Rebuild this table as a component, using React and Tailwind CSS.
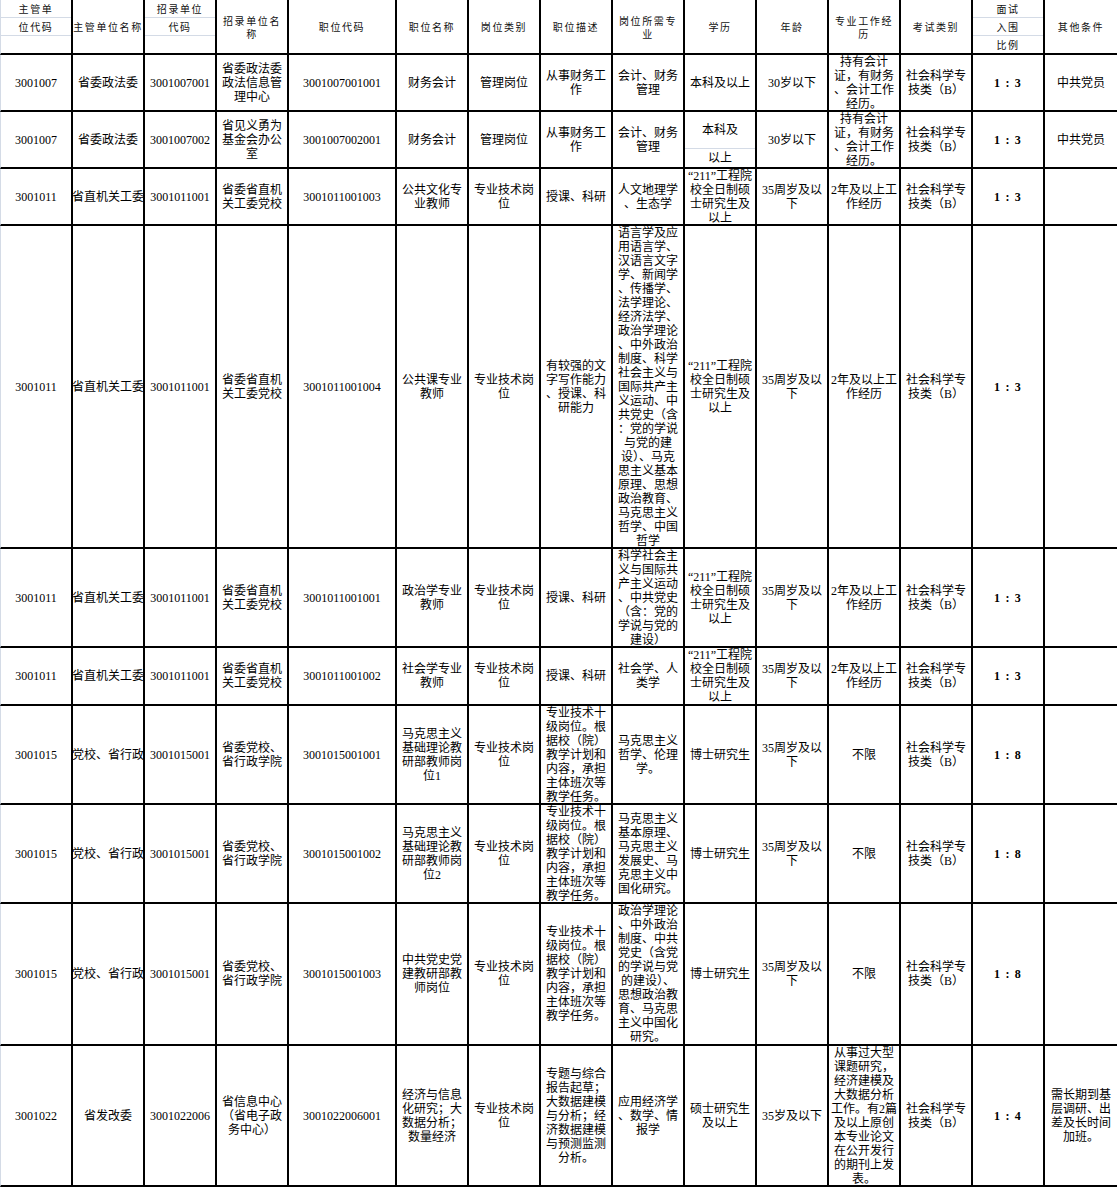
import clsx from "clsx";

// 职位表 — 招录职位一览
const GRID_COLS =
  "grid-cols-[73px_72px_72px_72px_108px_72px_72px_72px_72px_72px_72px_72px_72px_72px_72px]";
const GRID_ROWS =
  "grid-rows-[55px_57px_57px_57px_323px_99px_58px_99px_99px_142px_141px]";

const header = [
  { stack: ["主管单", "位代码", ""] },
  "主管单位名称",
  { stack: ["招录单位", "代码", ""] },
  "招录单位名\n称",
  "职位代码",
  "职位名称",
  "岗位类别",
  "职位描述",
  "岗位所需专\n业",
  "学历",
  "年龄",
  "专业工作经\n历",
  "考试类别",
  { stack: ["面试", "入围", "比例"] },
  "其他条件",
];

const exam = "社会科学专\n技类（B）";
const grad211 = "“211”工程院\n校全日制硕\n士研究生及\n以上";
const age35 = "35周岁及以\n下";
const work2 = "2年及以上工\n作经历";
const tech = "专业技术岗\n位";
const dangxiao = "专业技术十\n级岗位。根\n据校（院）\n教学计划和\n内容，承担\n主体班次等\n教学任务。";

const rows = [
  [
    "3001007", "省委政法委", "3001007001", "省委政法委\n政法信息管\n理中心", "3001007001001",
    "财务会计", "管理岗位", "从事财务工\n作", "会计、财务\n管理", "本科及以上", "30岁以下",
    "持有会计\n证，有财务\n、会计工作\n经历。", exam, "1 : 3", "中共党员",
  ],
  [
    "3001007", "省委政法委", "3001007002", "省见义勇为\n基金会办公\n室", "3001007002001",
    "财务会计", "管理岗位", "从事财务工\n作", "会计、财务\n管理", { split: ["本科及", "以上"] },
    "30岁以下", "持有会计\n证，有财务\n、会计工作\n经历。", exam, "1 : 3", "中共党员",
  ],
  [
    "3001011", "省直机关工委", "3001011001", "省委省直机\n关工委党校", "3001011001003",
    "公共文化专\n业教师", tech, "授课、科研", "人文地理学\n、生态学", grad211, age35, work2,
    exam, "1 : 3", "",
  ],
  [
    "3001011", "省直机关工委", "3001011001", "省委省直机\n关工委党校", "3001011001004",
    "公共课专业\n教师", tech, "有较强的文\n字写作能力\n、授课、科\n研能力",
    "语言学及应\n用语言学、\n汉语言文字\n学、新闻学\n、传播学、\n法学理论、\n经济法学、\n政治学理论\n、中外政治\n制度、科学\n社会主义与\n国际共产主\n义运动、中\n共党史（含\n：党的学说\n与党的建\n设）、马克\n思主义基本\n原理、思想\n政治教育、\n马克思主义\n哲学、中国\n哲学",
    grad211, age35, work2, exam, "1 : 3", "",
  ],
  [
    "3001011", "省直机关工委", "3001011001", "省委省直机\n关工委党校", "3001011001001",
    "政治学专业\n教师", tech, "授课、科研",
    "科学社会主\n义与国际共\n产主义运动\n、中共党史\n（含：党的\n学说与党的\n建设）",
    grad211, age35, work2, exam, "1 : 3", "",
  ],
  [
    "3001011", "省直机关工委", "3001011001", "省委省直机\n关工委党校", "3001011001002",
    "社会学专业\n教师", tech, "授课、科研", "社会学、人\n类学", grad211, age35, work2,
    exam, "1 : 3", "",
  ],
  [
    "3001015", "党校、省行政", "3001015001", "省委党校、\n省行政学院", "3001015001001",
    "马克思主义\n基础理论教\n研部教师岗\n位1", tech, dangxiao, "马克思主义\n哲学、伦理\n学。",
    "博士研究生", age35, "不限", exam, "1 : 8", "",
  ],
  [
    "3001015", "党校、省行政", "3001015001", "省委党校、\n省行政学院", "3001015001002",
    "马克思主义\n基础理论教\n研部教师岗\n位2", tech, dangxiao,
    "马克思主义\n基本原理、\n马克思主义\n发展史、马\n克思主义中\n国化研究。",
    "博士研究生", age35, "不限", exam, "1 : 8", "",
  ],
  [
    "3001015", "党校、省行政", "3001015001", "省委党校、\n省行政学院", "3001015001003",
    "中共党史党\n建教研部教\n师岗位", tech, dangxiao,
    "政治学理论\n、中外政治\n制度、中共\n党史（含党\n的学说与党\n的建设）、\n思想政治教\n育、马克思\n主义中国化\n研究。",
    "博士研究生", age35, "不限", exam, "1 : 8", "",
  ],
  [
    "3001022", "省发改委", "3001022006", "省信息中心\n（省电子政\n务中心）", "3001022006001",
    "经济与信息\n化研究；大\n数据分析；\n数量经济", tech,
    "专题与综合\n报告起草；\n大数据建模\n与分析；经\n济数据建模\n与预测监测\n分析。",
    "应用经济学\n、数学、情\n报学", "硕士研究生\n及以上", "35岁及以下",
    "从事过大型\n课题研究，\n经济建模及\n大数据分析\n工作。有2篇\n及以上原创\n本专业论文\n在公开发行\n的期刊上发\n表。",
    exam, "1 : 4", "需长期到基\n层调研、出\n差及长时间\n加班。",
  ],
];

function cellClass(col) {
  return clsx(
    "flex items-center justify-center overflow-hidden border-b-2 border-black text-center",
    col < 14 && "border-r-2",
    col === 0 && "border-l border-l-[#d4dbe6]"
  );
}

function Stack({ lines }) {
  return (
    <div className="flex w-full flex-col self-stretch">
      <div className="flex h-[18px] items-center justify-center border-b border-[#d4dbe6]">
        {lines[0]}
      </div>
      <div className="flex h-[18px] items-center justify-center border-b border-[#d4dbe6]">
        {lines[1]}
      </div>
      <div className="flex flex-1 items-center justify-center">{lines[2]}</div>
    </div>
  );
}

function Split({ parts }) {
  return (
    <div className="flex w-full flex-col self-stretch">
      <div className="flex h-[37px] items-center justify-center border-b border-[#d4dbe6]">
        {parts[0]}
      </div>
      <div className="flex flex-1 items-center justify-center">{parts[1]}</div>
    </div>
  );
}

export default function App() {
  return (
    <div className="w-[1117px] bg-white text-black">
      <div className={clsx("grid", GRID_COLS, GRID_ROWS)}>
        {/* Header */}
        {header.map((h, i) => (
          <div
            key={"h" + i}
            className={clsx(
              cellClass(i),
              "font-['Noto_Sans_CJK_SC',sans-serif] text-[10px] leading-[13px] tracking-[1.6px] text-[#111]"
            )}
          >
            {typeof h === "string" ? (
              <div className="whitespace-pre">{h}</div>
            ) : (
              <Stack lines={h.stack} />
            )}
          </div>
        ))}

        {/* Body */}
        {rows.map((row, r) =>
          row.map((c, i) => (
            <div
              key={r + "-" + i}
              className={clsx(
                cellClass(i),
                "font-['Liberation_Serif','Noto_Sans_CJK_SC',serif] text-[12px] leading-[14px]",
                i === 13 && "font-bold tracking-[1.2px]"
              )}
            >
              {typeof c === "string" ? (
                <div className="whitespace-pre">{c}</div>
              ) : (
                <Split parts={c.split} />
              )}
            </div>
          ))
        )}
      </div>
    </div>
  );
}
